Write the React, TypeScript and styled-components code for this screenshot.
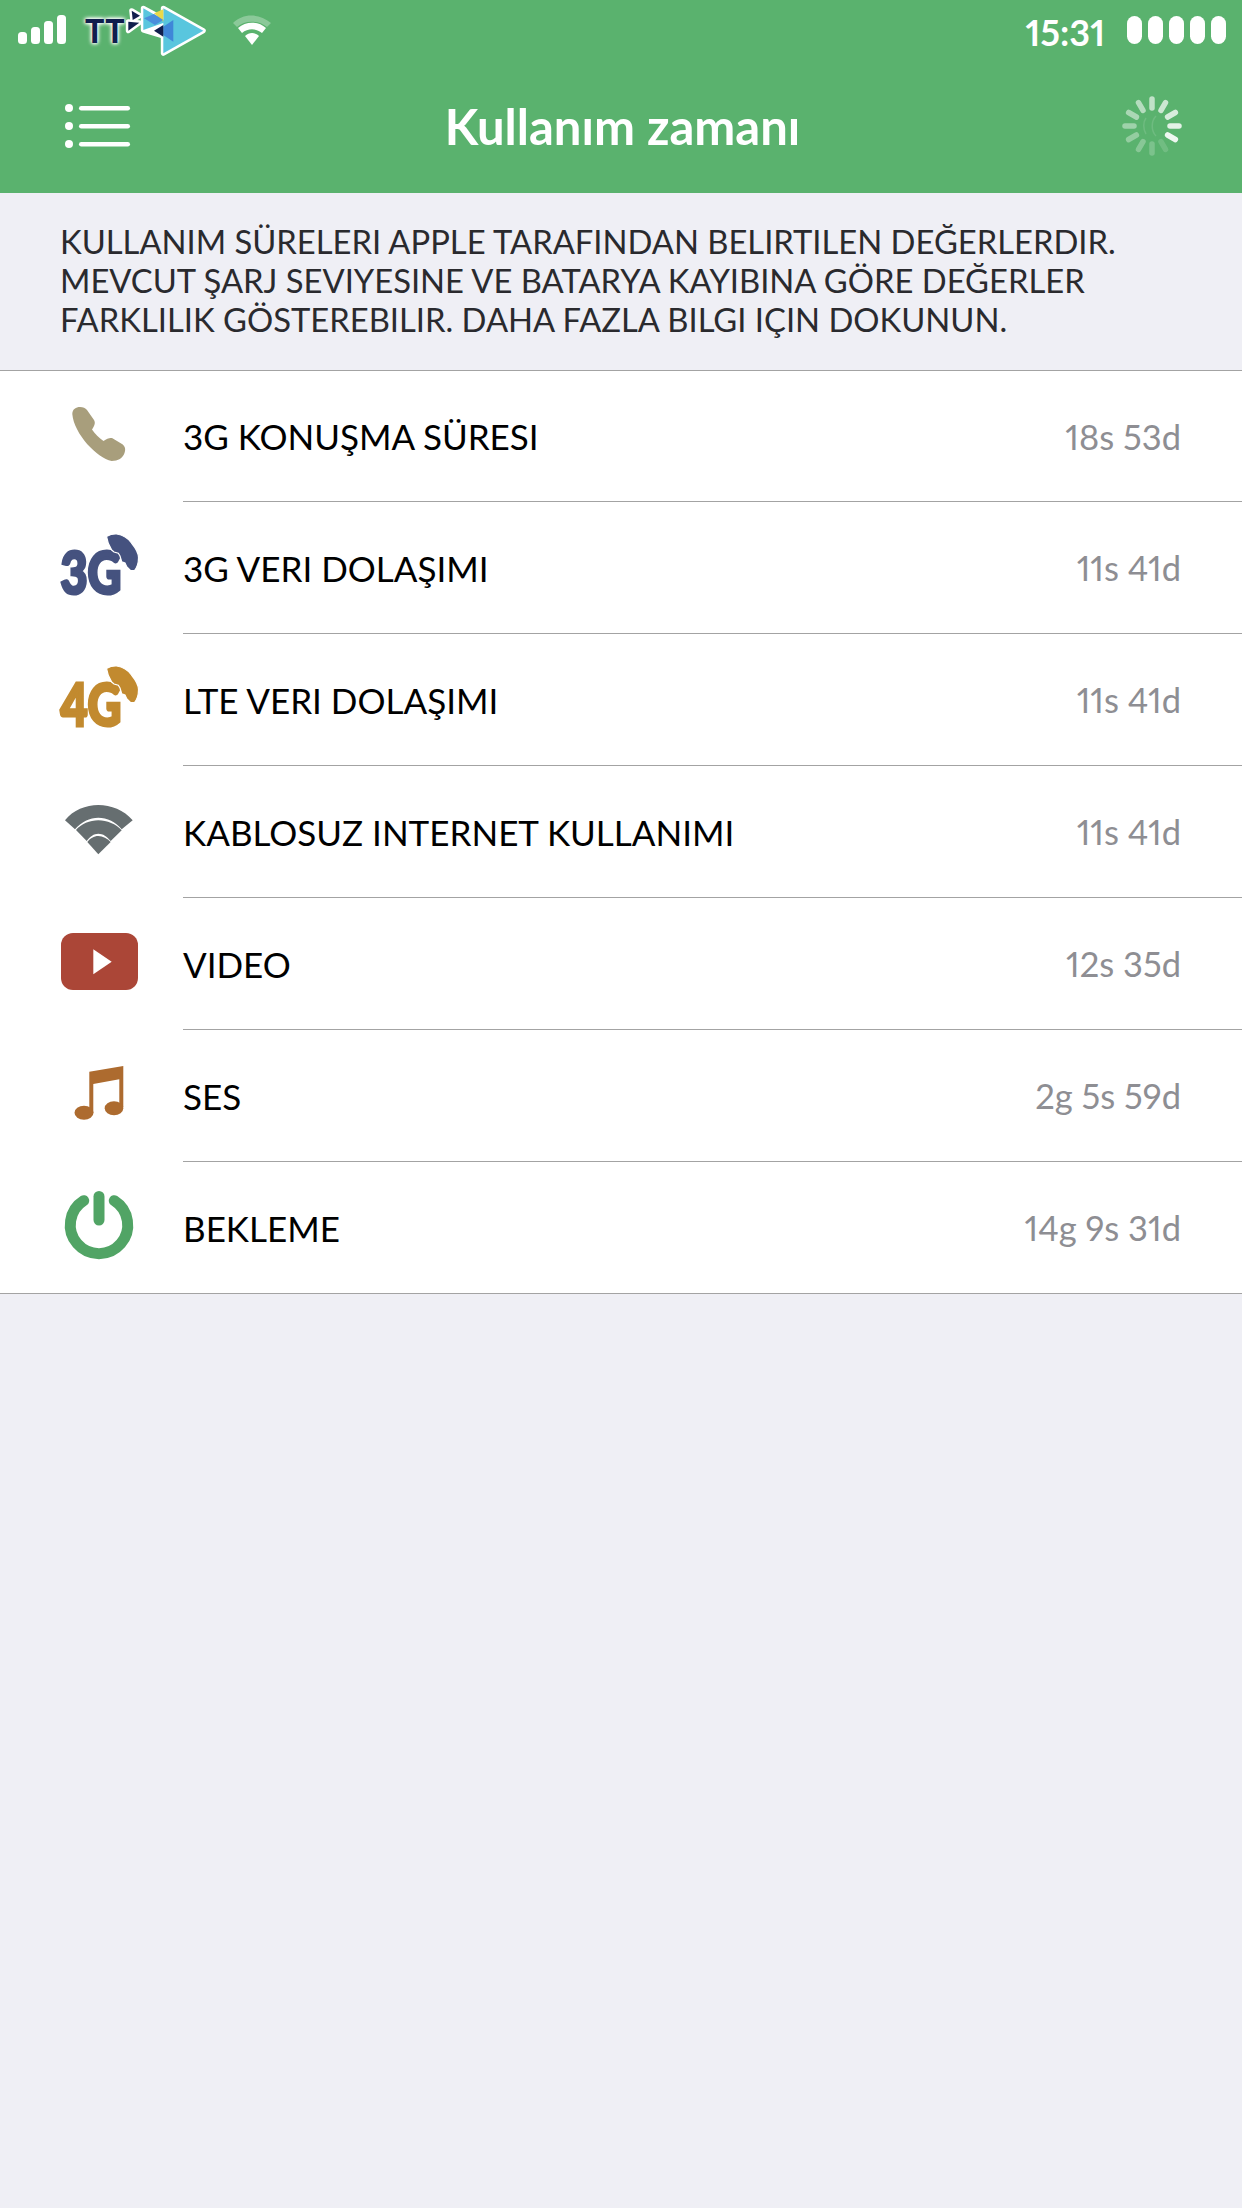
import React from 'react';
import styled, { createGlobalStyle } from 'styled-components';

const GlobalStyle = createGlobalStyle`
  html, body {
    margin: 0;
    padding: 0;
    background: #efeff5;
    font-family: Lato, "Noto Sans", sans-serif;
  }
`;

const Page = styled.div`
  width: 1242px;
  height: 2208px;
  background: #efeff5;
  overflow: hidden;
`;

const Header = styled.header`
  background: #5ab26e;
  height: 193px;
  display: flex;
  flex-direction: column;
`;

const StatusBar = styled.div`
  height: 62px;
  padding: 0 16px 0 18px;
  display: flex;
  align-items: flex-start;
  justify-content: space-between;
`;

const StatusGroup = styled.div`
  display: flex;
  align-items: flex-start;
`;

const Signal = styled.svg`
  width: 50px;
  height: 62px;
  flex: none;
`;

const Carrier = styled.span`
  margin: 11px 0 0 17px;
  width: 39px;
  font-size: 32px;
  line-height: 40px;
  font-weight: 900;
  letter-spacing: 1px;
  white-space: nowrap;
  color: #101e4d;
  text-shadow: 0 0 3px #fff, 0 0 4px #fff, 0 0 5px #fff;
`;

const Logo = styled.svg`
  width: 90px;
  height: 62px;
  flex: none;
  margin-right: 16px;
`;

const Wifi = styled.svg`
  width: 44px;
  height: 62px;
  flex: none;
`;

const Clock = styled.span`
  margin: 12px 22px 0 0;
  font-size: 36px;
  line-height: 40px;
  font-weight: 700;
  font-variant-numeric: proportional-nums;
  color: #fff;
`;

const Battery = styled.div`
  display: flex;
  gap: 6px;
  margin-top: 16px;
`;

const Pill = styled.span`
  width: 15px;
  height: 28px;
  border-radius: 8px;
  background: #fff;
`;

const NavBar = styled.div`
  flex: 1;
  padding: 0 57px 4px 60px;
  display: flex;
  align-items: center;
  justify-content: space-between;
`;

const NavIcon = styled.svg`
  width: 72px;
  height: 60px;
  flex: none;
`;

const Title = styled.h1`
  margin: 0;
  font-size: 49px;
  font-weight: 700;
  color: #fff;
`;

const Notice = styled.p`
  margin: 0;
  height: 177px;
  box-sizing: border-box;
  padding: 29px 40px 0 60px;
  font-size: 32.75px;
  line-height: 39px;
  color: #2a2a2e;
  white-space: nowrap;
`;

const NoticeLine = styled.span<{ $tight?: boolean }>`
  display: block;
  letter-spacing: ${p => (p.$tight ? '-0.01px' : 'normal')};
`;

const List = styled.ul`
  margin: 0;
  padding: 0;
  list-style: none;
  background: #fff;
  border-top: 1px solid #a3a3a3;
  border-bottom: 1px solid #a3a3a3;
`;

const Row = styled.li`
  height: 132px;
  display: flex;

  &:first-child,
  &:last-child {
    height: 131px;
  }
`;

const IconSlot = styled.div`
  width: 183px;
  flex: none;
  box-sizing: border-box;
  padding: 0 44px 6px 59px;
  display: flex;
  align-items: center;
`;

const RowIcon = styled.svg`
  width: 80px;
  height: 80px;
  display: block;
`;

const RowBody = styled.div<{ $last?: boolean }>`
  flex: 1;
  padding-right: 61px;
  display: flex;
  align-items: center;
  justify-content: space-between;
  border-bottom: ${p => (p.$last ? '0' : '1px solid #a3a3a3')};
`;

const RowLabel = styled.span`
  font-size: 35px;
  color: #000;
`;

const RowValue = styled.span`
  font-size: 34.5px;
  font-variant-numeric: proportional-nums;
  color: #8e8e93;
`;

const IconText = styled.text`
  font-family: Lato, sans-serif;
  font-weight: 900;
  font-size: 45px;
`;

function PhoneIcon() {
  return (
    <RowIcon viewBox="0 0 80 80">
      <path
        fill="#a89e7c"
        d="M13.3 20C13.5 15 17 13 21 13C24 13 26.5 14 28 16L35 26C36.5 28.5 36 31 33 35.5C36 40 40 44 44.5 47C48 44.5 50.5 43.5 53 44L63 50C66 52 67 55 65.5 59C64 64 59 67 52.7 67C38 64 15 40 13.3 20Z"
      />
    </RowIcon>
  );
}

function NetworkIcon({ label, color }: { label: string; color: string }) {
  return (
    <RowIcon viewBox="0 0 80 80">
      <g transform="scale(1 1.32)">
        <IconText
          x="1.5"
          y="52.2"
          fill={color}
          stroke={color}
          strokeWidth="2.4"
          textLength="61"
          lengthAdjust="spacingAndGlyphs"
        >
          {label}
        </IconText>
      </g>
      <path
        fill={color}
        stroke="#fff"
        strokeWidth="1.2"
        d="M47.5 11.5C51 9.500 54.500 8.700 57.700 9C64 10 69 13 72.500 18C77 23.500 79.700 28 79.500 33C79.500 38 78 42.500 75.500 45.700L71.700 45.700L67.700 41.700L66 38L62.700 36.700L61 31L59.300 28.300L55 27L52.700 25L49.300 18.300Z"
      />
    </RowIcon>
  );
}

function WifiIcon() {
  return (
    <RowIcon viewBox="0 0 80 80">
      <g fill="#666e70">
        <path d="M6 31.300C14 21 27 16 39.300 16C52 16 65 21 73.700 31.300L62.700 40.300C57 33 48 28.700 39.300 28.700C31 28.700 22 33 16 40.300Z" />
        <path d="M17 41C22 35 31 31.300 39.300 31.300C48 31.300 57 35 62.700 41.300L51.700 52C48 47.500 44 44.700 39.300 44.700C35 44.700 31 47.500 27.700 52Z" />
        <path d="M28.300 53C31 49.500 35 47 39.300 47C44 47 48 49.500 51.700 53L39.300 65.300Z" />
      </g>
    </RowIcon>
  );
}

function VideoIcon() {
  return (
    <RowIcon viewBox="0 0 80 80">
      <rect x="2" y="12" width="77" height="57" rx="12" fill="#ab4637" />
      <path d="M34.300 28.300L52.700 40.700L34.300 53.300Z" fill="#fff" />
    </RowIcon>
  );
}

function MusicIcon() {
  return (
    <RowIcon viewBox="0 0 80 80">
      <g fill="#ad6b2f">
        <path d="M30.300 18.700L64.300 13V54H60.300V26.300L34.300 31V60H30.300Z" />
        <ellipse cx="25" cy="59.700" rx="9.500" ry="7" />
        <ellipse cx="55" cy="55.300" rx="9.300" ry="7" />
      </g>
    </RowIcon>
  );
}

function PowerIcon() {
  return (
    <RowIcon viewBox="0 0 80 80">
      <g fill="none" stroke="#51a465" strokeWidth="11" strokeLinecap="round">
        <path d="M24.700 15.700A28.700 28.700 0 1 0 55.300 15.700" />
        <path d="M40 11.500V35" />
      </g>
    </RowIcon>
  );
}

const rows = [
  { label: '3G KONUŞMA SÜRESI', value: '18s 53d', icon: <PhoneIcon /> },
  { label: '3G VERI DOLAŞIMI', value: '11s 41d', icon: <NetworkIcon label="3G" color="#45527f" /> },
  { label: 'LTE VERI DOLAŞIMI', value: '11s 41d', icon: <NetworkIcon label="4G" color="#c28a2f" /> },
  { label: 'KABLOSUZ INTERNET KULLANIMI', value: '11s 41d', icon: <WifiIcon /> },
  { label: 'VIDEO', value: '12s 35d', icon: <VideoIcon /> },
  { label: 'SES', value: '2g 5s 59d', icon: <MusicIcon /> },
  { label: 'BEKLEME', value: '14g 9s 31d', icon: <PowerIcon /> },
];

// spokes of the pull-to-refresh spinner, brightest one at 4 o'clock
const spokes = Array.from({ length: 12 }, (_, i) => i);

export default function App() {
  return (
    <Page>
      <GlobalStyle />
      <Header>
        <StatusBar>
          <StatusGroup>
            <Signal viewBox="0 0 50 62">
              <g fill="#fff">
                <rect x="0" y="32" width="9" height="12" rx="3.500" />
                <rect x="13" y="27" width="9" height="17" rx="3.500" />
                <rect x="26" y="21" width="9" height="23" rx="3.500" />
                <rect x="39" y="15" width="9" height="29" rx="3.500" />
              </g>
            </Signal>
            <Carrier>TT</Carrier>
            <Logo viewBox="0 0 90 62">
              <g stroke="#fff" strokeWidth="5" strokeLinejoin="round" fill="#fff">
                <path d="M7.700 10.700L16 15.700L8.700 20Z" />
                <path d="M4.300 21.700L15.300 22.700L4.300 30.700Z" />
                <path d="M19.300 8.300L39.300 19V8.300L79.300 30.700L39.300 53.300V36L19.300 30Z" />
              </g>
              <path d="M39.300 8.300L79.300 30.700L39.300 53.300Z" fill="#59c6de" />
              <path d="M19.300 8.300L42.700 21.700L19.300 30Z" fill="#59c6de" />
              <path d="M30 13.300L39.300 9.300V21.700Z" fill="#e9d94a" />
              <path d="M20 18.300L30 14L39.300 20L31 25Z" fill="#4a8fdc" />
              <path d="M7.700 10.700L16 15.700L8.700 20Z" fill="#101e4d" />
              <path d="M4.300 21.700L15.300 22.700L4.300 30.700Z" fill="#101e4d" />
              <path d="M39.300 26.700L49.300 20V41.700L39.300 35Z" fill="#3f86d8" />
              <path d="M30 30.700L39.300 25V36.700Z" fill="#101e4d" />
            </Logo>
            <Wifi viewBox="0 0 44 62">
              <path d="M3 23C13 13 29 13 41 23L37 27C28 20 15 20 7 27Z" fill="#fff" opacity="0.3" />
              <path d="M8 28C16 21 28 21 36 28L32 33C26 28 18 28 12 33Z" fill="#fff" />
              <path d="M15 36C19 32 25 32 29 36L22 45Z" fill="#fff" />
            </Wifi>
          </StatusGroup>
          <StatusGroup>
            <Clock>15:31</Clock>
            <Battery>
              <Pill />
              <Pill />
              <Pill />
              <Pill />
              <Pill />
            </Battery>
          </StatusGroup>
        </StatusBar>
        <NavBar>
          <NavIcon viewBox="0 0 72 60">
            <g fill="#fff">
              <circle cx="9" cy="12" r="4" />
              <circle cx="9" cy="30" r="4" />
              <circle cx="9" cy="48" r="4" />
              <rect x="19" y="10" width="51" height="4.500" rx="2.250" />
              <rect x="19" y="28" width="51" height="4.500" rx="2.250" />
              <rect x="19" y="46" width="51" height="4.500" rx="2.250" />
            </g>
          </NavIcon>
          <Title>Kullanım zamanı</Title>
          <NavIcon viewBox="0 0 72 60">
            <g fill="none" stroke="#fff" strokeWidth="1.500" opacity="0.12">
              <path d="M33 22C30 26 30 33 33 38" />
              <path d="M43 20C38 25 38 35 43 40" />
            </g>
            {spokes.map(i => (
              <line
                key={i}
                x1="39"
                y1="12"
                x2="39"
                y2="3"
                stroke="#fff"
                strokeWidth="5.500"
                strokeLinecap="round"
                opacity={0.14 + 0.76 * ((i + 7) % 12) / 11}
                transform={`rotate(${i * 30} 39 30)`}
              />
            ))}
          </NavIcon>
        </NavBar>
      </Header>
      <Notice>
        <NoticeLine $tight>KULLANIM SÜRELERI APPLE TARAFINDAN BELIRTILEN DEĞERLERDIR.</NoticeLine>
        <NoticeLine>MEVCUT ŞARJ SEVIYESINE VE BATARYA KAYIBINA GÖRE DEĞERLER</NoticeLine>
        <NoticeLine>FARKLILIK GÖSTEREBILIR. DAHA FAZLA BILGI IÇIN DOKUNUN.</NoticeLine>
      </Notice>
      <List>
        {rows.map((row, i) => (
          <Row key={row.label}>
            <IconSlot>{row.icon}</IconSlot>
            <RowBody $last={i === rows.length - 1}>
              <RowLabel>{row.label}</RowLabel>
              <RowValue>{row.value}</RowValue>
            </RowBody>
          </Row>
        ))}
      </List>
    </Page>
  );
}
